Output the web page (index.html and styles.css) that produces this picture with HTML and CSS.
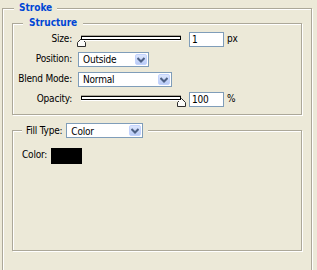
FILE: index.html
```html
<!DOCTYPE html>
<html>
<head>
<meta charset="utf-8">
<link rel="stylesheet" href="styles.css">
</head>
<body>
<div class="group outer">
  <div class="caption title">Stroke</div>

  <div class="group inner structure">
    <div class="caption title cap-structure">Structure</div>
    <div class="form">
      <div class="lbl">Size:</div>
      <div class="ctl">
        <div class="slider">
          <div class="track"></div>
          <svg class="thumb" style="left:-1px" width="9" height="9" viewBox="0 0 9 9"><polygon points="0.5,8.5 0.5,4.5 4.5,0.5 8.5,4.5 8.5,8.5" fill="#fbfbf8" stroke="#2e2e2e"/></svg>
        </div>
        <div class="field">1</div>
        <span class="unit">px</span>
      </div>

      <div class="lbl">Position:</div>
      <div class="ctl">
        <div class="combo w-pos"><span class="combo-text">Outside</span><span class="combo-btn"><svg width="8" height="6" viewBox="0 0 8 6"><polyline points="0.5,1 4,4.5 7.5,1" fill="none" stroke="#4d6185" stroke-width="2"/></svg></span></div>
      </div>

      <div class="lbl">Blend Mode:</div>
      <div class="ctl">
        <div class="combo w-blend"><span class="combo-text">Normal</span><span class="combo-btn"><svg width="8" height="6" viewBox="0 0 8 6"><polyline points="0.5,1 4,4.5 7.5,1" fill="none" stroke="#4d6185" stroke-width="2"/></svg></span></div>
      </div>

      <div class="lbl">Opacity:</div>
      <div class="ctl">
        <div class="slider">
          <div class="track"></div>
          <svg class="thumb" style="left:99px" width="9" height="9" viewBox="0 0 9 9"><polygon points="0.5,8.5 0.5,4.5 4.5,0.5 8.5,4.5 8.5,8.5" fill="#fbfbf8" stroke="#2e2e2e"/></svg>
        </div>
        <div class="field">100</div>
        <span class="unit">%</span>
      </div>
    </div>
  </div>

  <div class="group inner fill">
    <div class="caption cap-fill">
      <span class="fill-lbl">Fill Type:</span>
      <div class="combo w-fill"><span class="combo-text">Color</span><span class="combo-btn"><svg width="8" height="6" viewBox="0 0 8 6"><polyline points="0.5,1 4,4.5 7.5,1" fill="none" stroke="#4d6185" stroke-width="2"/></svg></span></div>
    </div>
    <div class="color-row">
      <span class="lbl-color">Color:</span>
      <div class="swatch"></div>
    </div>
  </div>
</div>
</body>
</html>
```

FILE: styles.css
```css
html, body {
  margin: 0;
  padding: 0;
  overflow: hidden;
  background: #ece9d8;
}

body {
  font-family: "DejaVu Sans Condensed", "DejaVu Sans", sans-serif;
  font-stretch: condensed;
  font-size: 10px;
  line-height: 13px;
  letter-spacing: -0.2px;
  color: #000;
}

.group {
  position: relative;
  box-sizing: border-box;
  border: 1px solid #aca899;
  box-shadow: inset 1px 1px 0 #fff, 1px 1px 0 #fff;
}

.outer {
  margin: 8px 5px 0 2px;
  height: 280px;
}

.inner {
  margin: 0 9px;
}

.caption {
  position: absolute;
  top: -8px;
  background: #ece9d8;
  white-space: nowrap;
}

.title {
  font-weight: bold;
  color: #0046d5;
  line-height: 13px;
  letter-spacing: 0;
}

.outer > .caption {
  left: 11px;
  padding: 0 5px;
}

.cap-structure {
  left: 10px;
  padding: 0 6px;
}

.structure {
  margin-top: 14px;
  padding: 8px 0 7px 0;
}

.form {
  display: grid;
  grid-template-columns: 59px auto;
  grid-auto-rows: 15px;
  column-gap: 6px;
  row-gap: 5px;
}

.lbl {
  text-align: right;
  white-space: nowrap;
}

.ctl {
  display: flex;
  align-items: flex-start;
}

.slider {
  position: relative;
  width: 108px;
  height: 15px;
}

.track {
  position: relative;
  z-index: 1;
  box-sizing: border-box;
  margin: 4px 0 0 3px;
  width: 100px;
  height: 4px;
  border: 1px solid #000;
  background: #fff;
  box-shadow: 0 -1px 0 #aca899, 0 1px 0 #fff;
}

.thumb {
  position: absolute;
  top: 6px;
  display: block;
}

.field {
  box-sizing: border-box;
  margin-left: 3px;
  width: 35px;
  height: 15px;
  border: 1px solid #7f9db9;
  background: #fff;
  padding-left: 2px;
}

.unit {
  margin-left: 3px;
}

.combo {
  box-sizing: border-box;
  display: flex;
  height: 15px;
  border: 1px solid #7f9db9;
  background: #fff;
}

.combo-text {
  flex: 1;
  padding-left: 4px;
  white-space: nowrap;
}

.combo-btn {
  box-sizing: border-box;
  width: 12px;
  height: 11px;
  margin: 1px 1px 1px 0;
  display: flex;
  align-items: center;
  justify-content: center;
  border: 1px solid #c3d3fd;
  border-radius: 2px;
  background: linear-gradient(#dce6fd, #b9cbf6);
}

.combo-btn svg {
  display: block;
}

.w-pos { width: 71px; }
.w-blend { width: 94px; }
.w-fill { width: 77px; }

.fill {
  margin-top: 15px;
  height: 121px;
  padding: 17px 0 0 9px;
}

.cap-fill {
  left: 9px;
  padding: 0 5px 0 4px;
  display: flex;
  align-items: center;
  gap: 4px;
  line-height: 15px;
}

.color-row {
  display: grid;
  grid-template-columns: 29px 31px;
  grid-template-rows: 16px;
}

.swatch {
  background: #000;
}
```
